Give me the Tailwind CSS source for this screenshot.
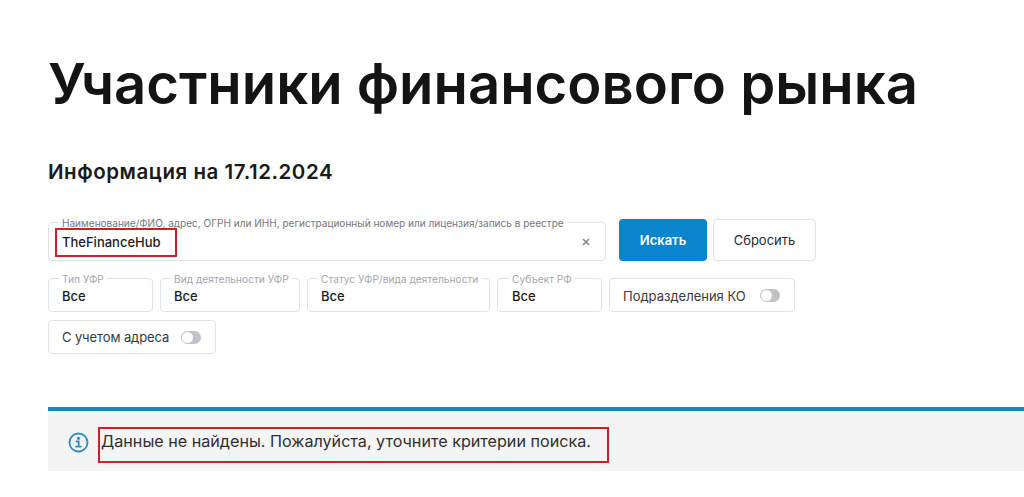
<!DOCTYPE html>
<html lang="ru">
<head>
<meta charset="utf-8">
<script src="https://cdn.jsdelivr.net/npm/@tailwindcss/browser@4"></script>
</head>
<body class="bg-white font-['Inter',sans-serif] text-[#1d1d1d] overflow-hidden">
<main class="relative h-[497px] w-[1024px] pl-[48px]">
  <h1 class="pt-[49px] h-[118px] text-[56.2px] leading-[70px] font-semibold whitespace-nowrap text-[#141414]">Участники финансового рынка</h1>
  <h2 class="mt-[41px] h-[30px] text-[20.5px] leading-[26px] font-semibold tracking-[0.55px] text-[#1a1a1a]">Информация на 17.12.2024</h2>

  <div class="mt-[30px] flex items-start w-[976px]">
    <div class="relative mt-[3px] flex h-[39px] w-[558px] items-center rounded border border-[#dfe1e3] pl-[13px] pr-[15px] pt-[2px]">
      <span class="absolute left-[10px] top-[-6px] bg-white px-[3px] text-[10.05px] leading-[12px] whitespace-nowrap text-[#75787c]">Наименование/ФИО, адрес, ОГРН или ИНН, регистрационный номер или лицензия/запись в реестре</span>
      <span class="text-[13px] font-medium text-[#1d1d1d]">TheFinanceHub</span>
      <svg class="ml-auto mb-[2px]" width="8" height="8" viewBox="0 0 8 8"><path d="M1 1l6 6M7 1L1 7" stroke="#85888c" stroke-width="1.6"/></svg>
    </div>
    <button class="ml-[13px] h-[42px] w-[88px] rounded bg-[#0a84cc] pt-[2px] text-[13px] font-semibold text-white">Искать</button>
    <button class="ml-[6px] h-[42px] w-[103px] rounded border border-[#dfe1e3] bg-white pt-[2px] text-[13px] text-[#2a2a2a]">Сбросить</button>
  </div>

  <div class="mt-[17px] flex gap-[7px] h-[34px]">
    <div class="relative flex h-[34px] w-[105px] items-center rounded border border-[#dfe1e3] pl-[13px] pt-[4px] text-[13px] font-medium">
      <span class="absolute left-[10px] top-[-6px] bg-white px-[3px] text-[10.2px] leading-[12px] font-normal text-[#a3a6aa]">Тип УФР</span>Все
    </div>
    <div class="relative flex h-[34px] w-[140px] items-center rounded border border-[#dfe1e3] pl-[13px] pt-[4px] text-[13px] font-medium">
      <span class="absolute left-[10px] top-[-6px] bg-white px-[3px] text-[10.2px] leading-[12px] font-normal whitespace-nowrap text-[#a3a6aa]">Вид деятельности УФР</span>Все
    </div>
    <div class="relative flex h-[34px] w-[183px] items-center rounded border border-[#dfe1e3] pl-[13px] pt-[4px] text-[13px] font-medium">
      <span class="absolute left-[10px] top-[-6px] bg-white px-[3px] text-[10.2px] leading-[12px] font-normal whitespace-nowrap text-[#a3a6aa]">Статус УФР/вида деятельности</span>Все
    </div>
    <div class="relative flex h-[34px] w-[105px] items-center rounded border border-[#dfe1e3] pl-[14px] pt-[4px] text-[13px] font-medium">
      <span class="absolute left-[11px] top-[-6px] bg-white px-[3px] text-[10.2px] leading-[12px] font-normal whitespace-nowrap text-[#a3a6aa]">Субъект РФ</span>Все
    </div>
    <div class="flex h-[34px] w-[186px] items-center rounded border border-[#dfe1e3] pl-[13px] text-[13px] text-[#3a3a3a]">
      <span class="pt-[3px]">Подразделения КО</span>
      <span class="ml-[14px] flex h-[13px] w-[20px] items-center rounded-full bg-[#bfc1c6] pl-[1px]"><span class="h-[11px] w-[11px] rounded-full bg-white"></span></span>
    </div>
  </div>

  <div class="mt-[8px] flex h-[34px] w-[168px] items-center rounded border border-[#dfe1e3] pl-[13px] text-[13px] text-[#3a3a3a]">
    <span class="pt-[1px] tracking-[-0.1px]">С учетом адреса</span>
    <span class="ml-[12px] flex h-[13px] w-[20px] items-center rounded-full bg-[#bfc1c6] pl-[1px]"><span class="h-[11px] w-[11px] rounded-full bg-white"></span></span>
  </div>

  <div class="mt-[53px] flex h-[64px] w-[976px] items-center border-t-[4px] border-[#1a87c4] bg-[#f4f4f4] pl-[20px] pt-[3px]">
    <svg class="mt-[-1px]" width="21" height="21" viewBox="0 0 21 21" fill="none" stroke="#2a8fc4" stroke-width="1.8"><circle cx="10.5" cy="10.5" r="9"/><path d="M8.5 9.5h2.2v5M8 14.6h5" stroke-linecap="round"/><circle cx="10.4" cy="6.3" r="0.7" fill="#2a8fc4"/></svg>
    <span class="ml-[12px] mt-[-3px] text-[16.15px] text-[#303030] whitespace-nowrap">Данные не найдены. Пожалуйста, уточните критерии поиска.</span>
  </div>

  <div class="absolute left-[55px] top-[228px] h-[29px] w-[122px] border-2 border-[#cf1f28]"></div>
  <div class="absolute left-[98px] top-[427px] h-[36px] w-[511px] border-2 border-[#cf1f28]"></div>
</main>
</body>
</html>
